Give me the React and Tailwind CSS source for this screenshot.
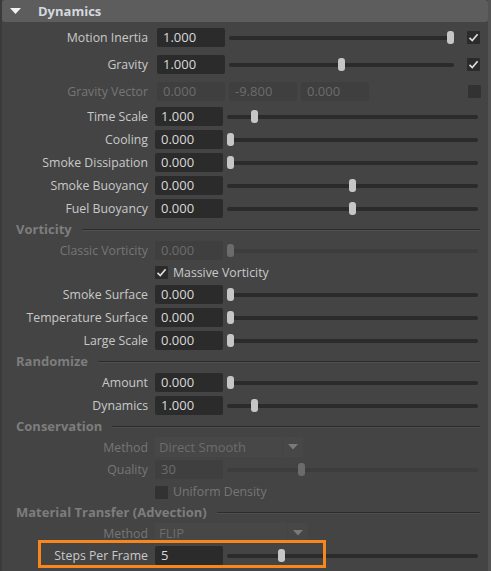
import React from "react";

const Check = ({ color = "#dcdcdc" }) => (
  <svg width="13" height="13" viewBox="0 0 13 13">
    <path d="M2.5 6.8 L5.3 9.6 L10.6 3.2" fill="none" stroke={color} strokeWidth="1.7" />
  </svg>
);

function Label({ children, disabled }) {
  return (
    <div className={disabled ? "w-[146px] shrink-0 pt-[2px] text-right text-[12.3px] text-[#767676]" : "w-[146px] shrink-0 pt-[2px] text-right text-[12.3px] text-[#c9c9c9]"}>
      {children}
    </div>
  );
}

function Field({ value, disabled, ml }) {
  const cls = disabled
    ? "w-[68px] h-[19px] shrink-0 bg-[#3f3f3f] rounded-[2px] pl-[6px] flex items-center text-[#6c6c6c]"
    : "w-[68px] h-[19px] shrink-0 bg-[#2b2b2b] rounded-[2px] pl-[6px] flex items-center text-[#dadada]";
  return <div className={`${cls} ${ml || "ml-[7px]"}`}>{value}</div>;
}

function Slider({ frac, short, disabled }) {
  const width = short ? 225 : 251;
  const left = frac * (width - 7);
  return (
    <div className={short ? "relative ml-[4px] w-[225px] h-[13px] flex items-center" : "relative ml-[4px] w-[251px] h-[13px] flex items-center"}>
      <div className={disabled ? "w-full h-[4px] rounded-full bg-[#3d3d3d]" : "w-full h-[4px] rounded-full bg-[#2b2b2b]"} />
      <div
        className={disabled ? "absolute top-0 w-[7px] h-[13px] rounded-[3px] bg-[#6b6b6b]" : "absolute top-0 w-[7px] h-[13px] rounded-[3px] bg-[#c6c6c6]"}
        style={{ left }}
      />
    </div>
  );
}

function Box({ checked, disabled, className = "" }) {
  return (
    <div className={`w-[13px] h-[13px] shrink-0 rounded-[1px] flex items-center justify-center ${disabled ? "bg-[#323232]" : "bg-[#2b2b2b]"} ${className}`}>
      {checked && <Check color={disabled ? "#777" : "#dcdcdc"} />}
    </div>
  );
}

function Section({ title }) {
  return (
    <div className="flex items-center h-[19px] pl-[14px] pr-[8px]">
      <div className="font-bold text-[#7d7d7d]">{title}</div>
      <div className="flex-1 ml-[10px] flex flex-col">
        <div className="h-[1px] bg-[#2c2c2c]" />
        <div className="h-[1px] bg-[#4f4f4f]" />
      </div>
    </div>
  );
}

function NumRow({ label, value, frac, disabled }) {
  return (
    <div className="flex items-center h-[23px]">
      <Label disabled={disabled}>{label}</Label>
      <Field value={value} disabled={disabled} />
      <Slider frac={frac} disabled={disabled} />
    </div>
  );
}

function Dropdown({ label, value, width }) {
  return (
    <div className="flex items-center h-[22px]">
      <Label disabled>{label}</Label>
      <div className={`ml-[7px] h-[20px] flex items-stretch ${width}`}>
        <div className="flex-1 bg-[#474747] flex items-center pl-[4px] text-[#6c6c6c]">{value}</div>
        <div className="w-[20px] ml-[1px] bg-[#474747] flex items-center justify-center">
          <svg width="10" height="6" viewBox="0 0 10 6">
            <polygon points="0,0 10,0 5,5.5" fill="#7a7a7a" />
          </svg>
        </div>
      </div>
    </div>
  );
}

export default function App() {
  return (
    <div className="w-[491px] h-[571px] overflow-hidden bg-[#444444] flex font-['Open_Sans',sans-serif] text-[13px] leading-none">
      <div className="w-[2px] shrink-0 bg-[#3b3b3b]" />
      <div className="flex-1 flex flex-col">
        <div className="h-[22px] shrink-0 bg-[#5d5d5d] rounded-[3px] flex items-center">
          <svg className="ml-[8px]" width="11" height="7" viewBox="0 0 11 7">
            <polygon points="0,0 11,0 5.5,6" fill="#f2f2f2" />
          </svg>
          <span className="ml-[17px] font-bold text-[#d3d9df]">Dynamics</span>
        </div>
        <div className="h-[2px]" />
        <div className="flex items-center h-[27px]">
          <Label>Motion Inertia</Label>
          <Field value="1.000" ml="ml-[9px]" />
          <Slider frac={1} short />
          <Box checked className="ml-[13px]" />
        </div>
        <div className="flex items-center h-[27px]">
          <Label>Gravity</Label>
          <Field value="1.000" ml="ml-[9px]" />
          <Slider frac={0.5} short />
          <Box checked className="ml-[13px]" />
        </div>
        <div className="flex items-center h-[27px]">
          <Label disabled>Gravity Vector</Label>
          <Field value="0.000" disabled ml="ml-[9px]" />
          <Field value="-9.800" disabled ml="ml-[4px]" />
          <Field value="0.000" disabled ml="ml-[4px]" />
          <Box disabled className="ml-[99px]" />
        </div>
        <NumRow label="Time Scale" value="1.000" frac={0.1} />
        <NumRow label="Cooling" value="0.000" frac={0} />
        <NumRow label="Smoke Dissipation" value="0.000" frac={0} />
        <NumRow label="Smoke Buoyancy" value="0.000" frac={0.5} />
        <NumRow label="Fuel Buoyancy" value="0.000" frac={0.5} />
        <Section title="Vorticity" />
        <NumRow label="Classic Vorticity" value="0.000" frac={0} disabled />
        <div className="flex items-center h-[21px]">
          <div className="w-[146px] shrink-0" />
          <Box checked className="ml-[7px]" />
          <span className="ml-[5px] pt-[1px] text-[12.3px] text-[#c9c9c9]">Massive Vorticity</span>
        </div>
        <NumRow label="Smoke Surface" value="0.000" frac={0} />
        <NumRow label="Temperature Surface" value="0.000" frac={0} />
        <NumRow label="Large Scale" value="0.000" frac={0} />
        <Section title="Randomize" />
        <NumRow label="Amount" value="0.000" frac={0} />
        <NumRow label="Dynamics" value="1.000" frac={0.1} />
        <Section title="Conservation" />
        <Dropdown label="Method" value="Direct Smooth" width="w-[148px]" />
        <NumRow label="Quality" value="30" frac={0.29} disabled />
        <div className="flex items-center h-[22px]">
          <div className="w-[146px] shrink-0" />
          <Box disabled className="ml-[7px]" />
          <span className="ml-[5px] pt-[1px] text-[12.3px] text-[#767676]">Uniform Density</span>
        </div>
        <Section title="Material Transfer (Advection)" />
        <Dropdown label="Method" value="FLIP" width="w-[153px]" />
        <div className="relative">
          <NumRow label="Steps Per Frame" value="5" frac={0.21} />
          <div className="absolute left-[36px] top-[-4px] w-[288px] h-[28px] border-[3px] border-[#f7861f]" />
        </div>
      </div>
      <div className="w-[3px] shrink-0 bg-[#535353]" />
    </div>
  );
}
